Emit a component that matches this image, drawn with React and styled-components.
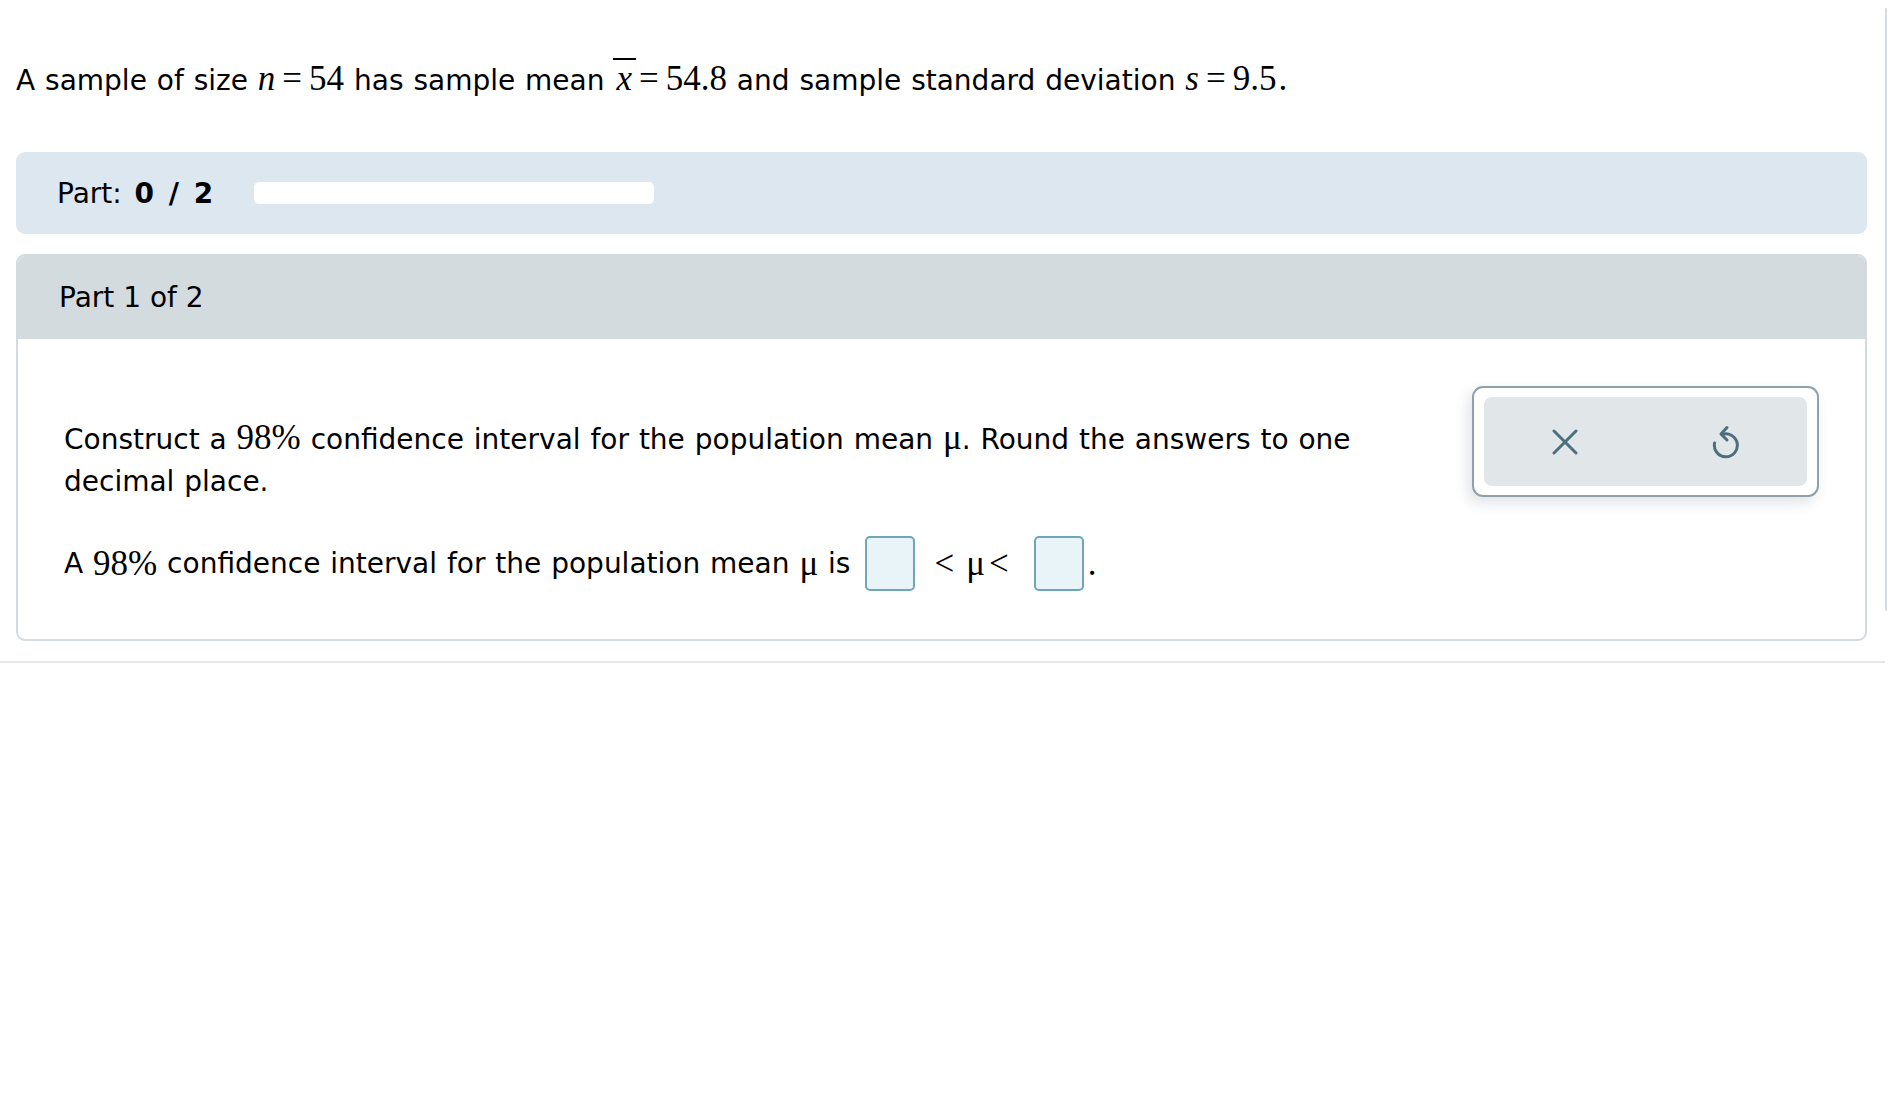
import React from 'react';
import styled, { createGlobalStyle } from 'styled-components';

const GlobalStyle = createGlobalStyle`
    body {
        margin: 0;
        background: #ffffff;
        font-family: "DejaVu Sans", Verdana, sans-serif;
        color: #000000;
    }
`;

const Page = styled.div`
    display: flex;
    align-items: flex-start;
    width: 1888px;
`;

const Main = styled.div`
    width: 1885px;
    box-sizing: border-box;
    padding: 60px 18px 20px 16px;
    border-bottom: 2px solid #e4e7e9;
`;

const Rail = styled.div`
    width: 0;
    height: 603px;
    margin-top: 8px;
    border-left: 2px solid #d6dce0;
    border-radius: 2px;
`;

const Text = styled.p`
    margin: 0;
    font-size: 28px;
    line-height: 42px;
    word-spacing: 1px;
`;

const Question = styled(Text)`
    white-space: nowrap;
`;

const Num = styled.span`
    font-family: "Liberation Serif", "Times New Roman", serif;
    font-size: 35px;
    font-style: normal;
    line-height: 1;
`;

const Var = styled(Num)`
    font-style: italic;
`;

const Op = styled(Num)`
    display: inline-block;
    margin: ${props => props.$space || '0 7px'};
`;

const Bar = styled(Var)`
    position: relative;
    display: inline-block;
    margin-left: 2px;
`;

const Overline = styled.span`
    position: absolute;
    left: -3px;
    right: -4px;
    top: -3px;
    border-top: 2px solid #000;
`;

const PartBar = styled.div`
    display: flex;
    align-items: center;
    gap: 40px;
    height: 82px;
    margin-top: 50px;
    padding-left: 41px;
    background: #dde7ef;
    border-radius: 9px;
    font-size: 28px;
`;

const Score = styled.b`
    margin-left: 4px;
    letter-spacing: 1px;
    word-spacing: 3px;
`;

const Progress = styled.div`
    width: 400px;
    height: 22px;
    background: #ffffff;
    border-radius: 5px;
`;

const Card = styled.div`
    margin-top: 20px;
    border: 2px solid #d3dbdf;
    border-radius: 9px;
    overflow: hidden;
`;

const CardHeader = styled.div`
    display: flex;
    align-items: center;
    height: 83px;
    padding-left: 41px;
    background: #d3dbdf;
    font-size: 28px;
`;

const CardBody = styled.div`
    display: flex;
    align-items: flex-start;
    justify-content: space-between;
    padding: 47px 46px 48px 46px;
`;

const Content = styled.div`
    width: 1310px;
    padding-top: 33px;
`;

const Answer = styled.div`
    display: flex;
    align-items: center;
    height: 56px;
    margin-top: 32px;
    font-size: 28px;
    word-spacing: 1px;
    white-space: pre;
`;

const Box = styled.span`
    display: inline-block;
    width: 46px;
    height: 51px;
    margin: ${props => props.$margin};
    border: 2px solid #6fa6b4;
    border-radius: 5px;
    background: #e9f4f9;
`;

const Tools = styled.div`
    width: 347px;
    height: 111px;
    box-sizing: border-box;
    padding: 9px 10px;
    border: 2px solid #8fa2ab;
    border-radius: 11px;
    background: #ffffff;
    box-shadow: -4px 6px 14px rgba(40, 60, 70, 0.14);
`;

const ToolRow = styled.div`
    display: flex;
    height: 100%;
    background: #e1e6e9;
    border-radius: 8px;
`;

const ToolButton = styled.button`
    flex: 1;
    display: flex;
    align-items: center;
    justify-content: center;
    padding: 0;
    border: none;
    background: transparent;
    cursor: pointer;
`;

const CloseIcon = () => (
    <svg width="26" height="26" viewBox="0 0 26 26" fill="none" stroke="#4b6f7e" strokeWidth="3" strokeLinecap="round">
        <path d="M2 2 L24 24 M24 2 L2 24" />
    </svg>
);

const UndoIcon = () => (
    <svg width="28" height="36" viewBox="0 0 28 36" fill="none" stroke="#4b6f7e" strokeWidth="3" strokeLinecap="round" strokeLinejoin="round">
        <path d="M10 10.5 A11.5 11.5 0 1 1 2.6 19" />
        <path d="M15 3.5 L9 10 L15 16" />
    </svg>
);

const App = () => {
    return (
        <Page>
            <GlobalStyle />
            <Main>
                <Question>
                    A sample of size <Var>n</Var><Op>=</Op><Num>54</Num> has sample mean{' '}
                    <Bar>x<Overline /></Bar><Op>=</Op><Num>54.8</Num> and sample standard deviation{' '}
                    <Var>s</Var><Op>=</Op><Num>9.5</Num><Op $space="0 0 0 2px">.</Op>
                </Question>

                <PartBar>
                    <span>Part: <Score>0 / 2</Score></span>
                    <Progress />
                </PartBar>

                <Card>
                    <CardHeader>Part 1 of 2</CardHeader>
                    <CardBody>
                        <Content>
                            <Text>
                                Construct a <Num>98%</Num> confidence interval for the population mean <Num>μ</Num>. Round the answers to one decimal place.
                            </Text>
                            <Answer>
                                A <Num>98%</Num> confidence interval for the population mean <Num>μ</Num> is
                                <Box $margin="0 0 0 15px" />
                                <Op $space="0 12px 0 19px">{'<'}</Op>
                                <Num>μ</Num>
                                <Op $space="0 0 0 4px">{'<'}</Op>
                                <Box $margin="0 0 0 25px" />
                                <Op $space="0 0 0 4px">.</Op>
                            </Answer>
                        </Content>
                        <Tools>
                            <ToolRow>
                                <ToolButton aria-label="Clear"><CloseIcon /></ToolButton>
                                <ToolButton aria-label="Undo"><UndoIcon /></ToolButton>
                            </ToolRow>
                        </Tools>
                    </CardBody>
                </Card>
            </Main>
            <Rail />
        </Page>
    );
};

export default App;
